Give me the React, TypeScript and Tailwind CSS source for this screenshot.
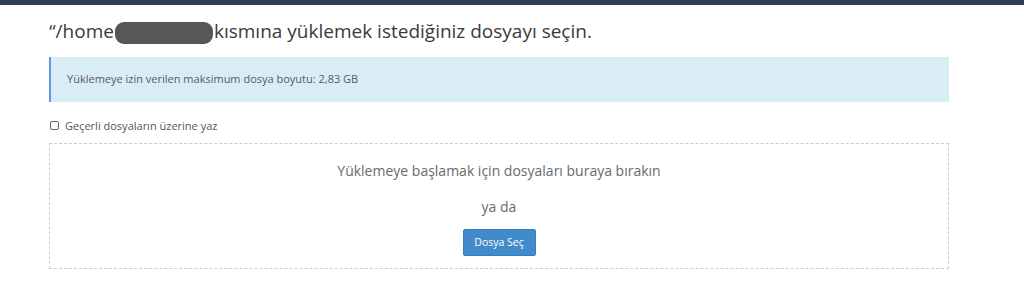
export default function App() {
  return (
    <div className="h-[301px] w-[1024px] bg-white font-['Open_Sans',sans-serif] text-[#333]">
      <div className="h-[5px] bg-[#2c3e50]" />
      <div className="w-[900px] pl-[49px] box-content">
        <h1 className="mt-[13px] flex h-[26px] items-center text-[19px] leading-[26px] text-[#3a3a3a]">
          <span>“/home</span>
          <span className="mx-[1px] inline-block h-[22px] w-[98px] translate-y-[2px] rounded-[9px] bg-[#575757] blur-[0.6px]" />
          <span>kısmına yüklemek istediğiniz dosyayı seçin.</span>
        </h1>

        <div className="mt-[13px] flex h-[45px] items-center border-l-2 border-[#5b9bd5] bg-[#d9edf7] pl-[16px] text-[11px] text-[#5a5a5a]">
          Yüklemeye izin verilen maksimum dosya boyutu: 2,83 GB
        </div>

        <label className="mt-[16px] flex h-[15px] items-center gap-[6px] pl-[1px] text-[11px] leading-[15px] text-[#555]">
          <span className="inline-block h-[9px] w-[9px] rounded-[2px] border border-[#666] bg-white" />
          Geçerli dosyaların üzerine yaz
        </label>

        <div className="mt-[10px] flex h-[126px] flex-col items-center border border-dashed border-[#ccc]">
          <p className="mt-[18px] text-[14px] leading-[18px] text-[#6a6a6a]">
            Yüklemeye başlamak için dosyaları buraya bırakın
          </p>
          <p className="mt-[18px] text-[14px] leading-[18px] text-[#6a6a6a]">ya da</p>
          <button
            type="button"
            className="mt-[13px] h-[27px] w-[73px] rounded-[2px] border border-[#357ebd] bg-[#428bca] text-[10.5px] text-white"
          >
            Dosya Seç
          </button>
        </div>
      </div>
    </div>
  );
}
